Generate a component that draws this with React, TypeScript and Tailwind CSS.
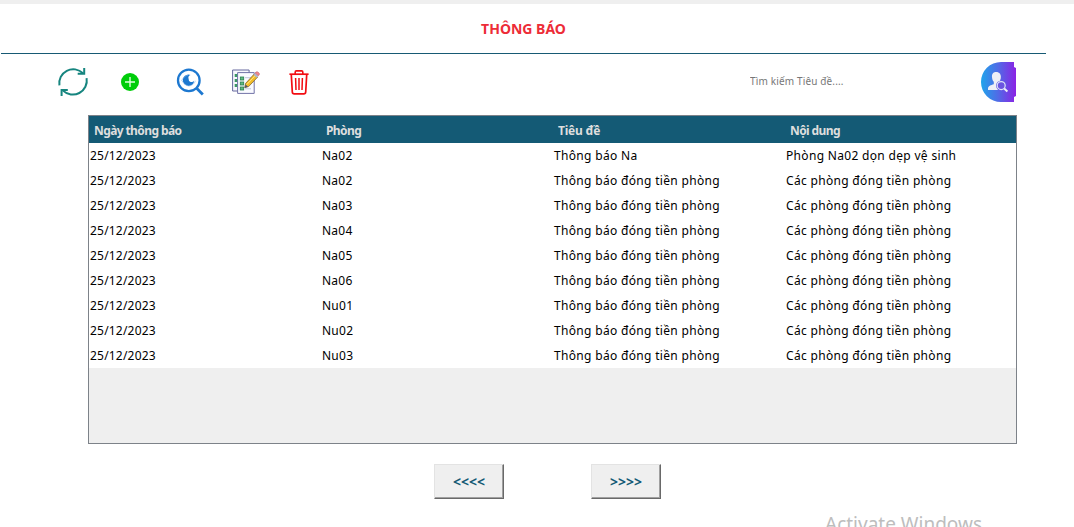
import React from "react";

const notices = [
  ["25/12/2023", "Na02", "Thông báo Na", "Phòng Na02 dọn dẹp vệ sinh"],
  ["25/12/2023", "Na02", "Thông báo đóng tiền phòng", "Các phòng đóng tiền phòng"],
  ["25/12/2023", "Na03", "Thông báo đóng tiền phòng", "Các phòng đóng tiền phòng"],
  ["25/12/2023", "Na04", "Thông báo đóng tiền phòng", "Các phòng đóng tiền phòng"],
  ["25/12/2023", "Na05", "Thông báo đóng tiền phòng", "Các phòng đóng tiền phòng"],
  ["25/12/2023", "Na06", "Thông báo đóng tiền phòng", "Các phòng đóng tiền phòng"],
  ["25/12/2023", "Nu01", "Thông báo đóng tiền phòng", "Các phòng đóng tiền phòng"],
  ["25/12/2023", "Nu02", "Thông báo đóng tiền phòng", "Các phòng đóng tiền phòng"],
  ["25/12/2023", "Nu03", "Thông báo đóng tiền phòng", "Các phòng đóng tiền phòng"],
];

function RefreshIcon() {
  return (
    <svg width="32" height="32" viewBox="0 0 32 32" fill="none" stroke="#16857f" strokeWidth="2">
      <path d="M2.4 19.4A14 14 0 0 1 26 7.2" />
      <path d="M29.6 12.2A14 14 0 0 1 6 24.6" />
      <path d="M27.2 2V7.7H20.7" />
      <path d="M4.6 30V24.1H10.8" />
    </svg>
  );
}

function AddIcon() {
  return (
    <svg width="18" height="18" viewBox="0 0 18 18">
      <circle cx="9" cy="9" r="9" fill="#00cd0a" />
      <path d="M9 4v10M4 9h10" stroke="#dcffdc" strokeWidth="1.4" />
    </svg>
  );
}

function ViewIcon() {
  return (
    <svg width="28" height="28" viewBox="0 0 28 28" fill="none">
      <circle cx="12.8" cy="12.4" r="10.8" stroke="#1d78d0" strokeWidth="2.3" />
      <path d="M20.4 20.1l6.4 6.4" stroke="#1d78d0" strokeWidth="2.8" />
      <path d="M12.6 6.5a5.7 5.7 0 1 0 5.6 6a3 3 0 0 1-5.6-1.8a3 3 0 0 1 1.9-3.8z" fill="#1d78d0" />
      <path d="M5.5 12.8c1.5-3 3.3-5 6.5-5.7M19.4 12.8c-.8 2.5-3 4.8-6.4 5.2c-3-.3-5.6-2.4-7-5.2" stroke="#85b6e5" strokeWidth=".6" />
    </svg>
  );
}

function EditIcon() {
  return (
    <svg width="28" height="26" viewBox="0 0 28 26">
      <path d="M.6 1h16.5v21H.6z" fill="#f7f8fd" stroke="#66699e" />
      <path d="M2.7 5h4v3h-4zM2.7 10h4v3h-4zM2.7 15h4v3h-4z" fill="#3c9865" />
      <path d="M5.6 3.6h16.6v20.8H5.6z" fill="#fafbff" stroke="#7173a7" />
      <g fill="#61b980" stroke="#277e51" strokeWidth=".8">
        <rect x="8.3" y="8" width="3.4" height="3" />
        <rect x="8.3" y="13" width="3.4" height="3" />
        <rect x="8.3" y="18" width="3.4" height="3" />
      </g>
      <path d="M13 8.7h6M13 19.8h6" stroke="#c0c6de" />
      <path d="M13.7 14.3L22.2 5.1l3.4 3-9 9.5-3.9.9z" fill="#f2bd27" stroke="#81642c" strokeWidth=".8" />
      <path d="M14.8 15.5l8.7-9.3" stroke="#ffe382" />
      <path d="M13.6 15.5l-1 3.4 3.4-1.2z" fill="#51556b" />
      <path d="M21.6 5.9l1.5-1.7 3.2 2.8-1.5 1.8z" fill="#aeb6cc" />
      <path d="M23.1 4l1-1q1-.7 2.4.5t.7 2.3l-.9 1z" fill="#f3898d" stroke="#bb5762" strokeWidth=".6" />
    </svg>
  );
}

function DeleteIcon() {
  return (
    <svg width="20" height="25" viewBox="0 0 20 25" fill="none" stroke="#f20c12">
      <path d="M.4 4.2h19.2" strokeWidth="1.7" />
      <path d="M6.2 4V2q0-1.1 1.2-1.1h5.2q1.2 0 1.2 1.1v2" strokeWidth="1.6" />
      <path d="M2.3 4.7l1 17.3q.1 1.9 1.9 1.9h9.6q1.8 0 1.9-1.9l1-17.3" strokeWidth="1.7" />
      <path d="M6.6 8l.4 12M10 8v12M13.4 8l-.4 12" strokeWidth="1.5" />
    </svg>
  );
}

function UserSearchIcon() {
  return (
    <svg width="35" height="40" viewBox="0 0 35 40">
      <defs>
        <linearGradient id="user-search-fill">
          <stop offset="0" stopColor="#20a4eb" />
          <stop offset=".5" stopColor="#5269e6" />
          <stop offset="1" stopColor="#8b22e5" />
        </linearGradient>
      </defs>
      <path d="M20 0H33V5L35 6V34L33 35V40H20A20 20 0 0 1 20 0Z" fill="url(#user-search-fill)" />
      <path d="M15 10c-3 0-4.3 2.2-4 5.2c.2 2 .8 3.5 1.8 4.6v2.4c-2.8 1-5.8 1.6-5.8 4.4v1.3h13v-8.4c-1.2-.5-1-1.2-.6-2c.6-1 .8-4.2-.4-5.8c-.9-1.2-2.2-1.7-4-1.7z" fill="#eeeff6" />
      <circle cx="20.2" cy="23.6" r="5.2" fill="#6759e4" />
      <circle cx="20.2" cy="23.6" r="4" fill="#6c55e1" stroke="#dde3f8" strokeWidth="1.2" />
      <path d="M23.2 26.5l3.2 3" stroke="#eeeff6" strokeWidth="2" />
    </svg>
  );
}

const cellTracking = ["tracking-[0.2px]", "tracking-[0.25px]", "tracking-[0.32px]", "tracking-[0.32px]"];

export default function App() {
  return (
    <main className="flex h-[527px] w-[1074px] flex-col overflow-hidden border-t-4 border-[#efefef] bg-white font-['Noto_Sans',sans-serif] text-black">
      <header className="ml-px flex h-[50px] w-[1045px] shrink-0 justify-center border-b border-[#175a74] pt-[15px]">
        <h1 className="text-[14px] leading-5 font-bold text-[#ed2c37]">THÔNG BÁO</h1>
      </header>

      <section className="flex h-[61px] shrink-0 items-start pt-2">
        <button className="mt-1 ml-[57px]" aria-label="Làm mới"><RefreshIcon /></button>
        <button className="mt-[11px] ml-8" aria-label="Thêm"><AddIcon /></button>
        <button className="mt-1.5 ml-[37px]" aria-label="Xem"><ViewIcon /></button>
        <button className="mt-[7px] ml-7" aria-label="Sửa"><EditIcon /></button>
        <button className="mt-2 ml-[29px]" aria-label="Xóa"><DeleteIcon /></button>
        <input
          aria-label="Tìm kiếm"
          placeholder="Tìm kiếm Tiêu đề...."
          className="mt-[9px] ml-[441px] h-5 w-[199px] font-['Noto_Sans',sans-serif] text-[10px] tracking-[0.15px] outline-none placeholder:text-[#777777] placeholder:opacity-100"
        />
        <button className="ml-8" aria-label="Tìm"><UserSearchIcon /></button>
      </section>

      <section className="ml-[88px] flex h-[329px] w-[929px] shrink-0 flex-col border border-[#7d8289] bg-[#efefef]">
        <div className="grid h-[27px] shrink-0 grid-cols-[232px_232px_232px_1fr] bg-[#145a75] text-[12px] leading-[29px] font-bold text-[#dedede]">
          <span className="pl-[5px] tracking-[-0.6px]">Ngày thông báo</span>
          <span className="pl-[5px] tracking-[-0.6px]">Phòng</span>
          <span className="pl-[5px] tracking-[-0.2px]">Tiêu đề</span>
          <span className="pl-[5px] tracking-[-0.6px]">Nội dung</span>
        </div>
        {notices.map((notice, row) => (
          <div key={row} className="grid h-[25px] shrink-0 grid-cols-[232px_232px_232px_1fr] bg-white text-[12px] leading-[25px]">
            {notice.map((text, col) => (
              <span key={col} className={`pl-px whitespace-nowrap ${cellTracking[col]}`}>{text}</span>
            ))}
          </div>
        ))}
      </section>

      <nav className="mt-5 ml-[434px] flex shrink-0 gap-[87px]">
        {["<<<<", ">>>>"].map((label) => (
          <button
            key={label}
            className="h-[35px] w-[70px] border border-t-[#e3e3e3] border-r-[#696969] border-b-[#696969] border-l-[#e3e3e3] bg-[#efefef] text-[14px] leading-[31px] font-bold text-[#145a75] shadow-[inset_-1px_-1px_0_#a0a0a0]"
          >
            {label}
          </button>
        ))}
      </nav>

      <div className="mt-3 ml-[825px] shrink-0 text-[19px] leading-[26px] whitespace-nowrap text-[#bdbdbd]">Activate Windows</div>
    </main>
  );
}
